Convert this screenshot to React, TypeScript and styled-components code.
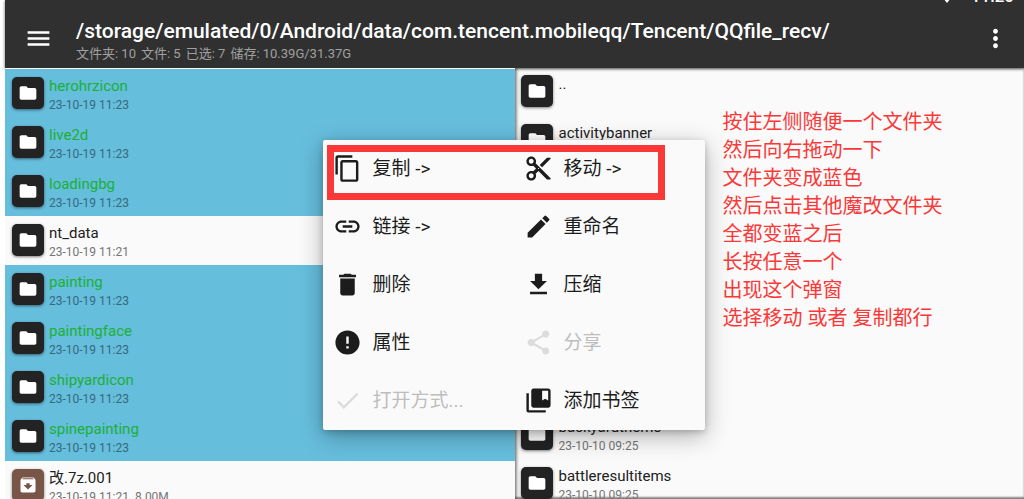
import React from 'react';
import styled, { createGlobalStyle, css } from 'styled-components';
import type { IconType } from 'react-icons';
import {
  MdArchive,
  MdCheck,
  MdCollectionsBookmark,
  MdContentCopy,
  MdContentCut,
  MdDelete,
  MdEdit,
  MdError,
  MdFileDownload,
  MdFolder,
  MdLink,
  MdMenu,
  MdMoreVert,
  MdShare,
} from 'react-icons/md';

const GlobalStyle = createGlobalStyle`
  * { box-sizing: border-box; }
  body {
    margin: 0;
    background: #fff;
    font-family: Roboto, "Noto Sans CJK SC", sans-serif;
    color: #212121;
  }
  button { font: inherit; color: inherit; background: none; border: 0; padding: 0; }
`;

const Page = styled.div`
  height: 100vh;
  padding-left: 5px;
  display: flex;
  flex-direction: column;
  overflow: hidden;
`;

const Header = styled.header`
  position: relative;
  z-index: 1;
  flex: none;
  background: #303030;
  color: #fff;
  box-shadow: 0 1px 3px rgba(0, 0, 0, 0.6);
`;

const StatusBar = styled.div`
  height: 4px;
  padding-right: 10px;
  display: flex;
  justify-content: flex-end;
  align-items: flex-end;
  gap: 16px;
  overflow: hidden;
`;

const Signal = styled.svg`
  flex: none;
  width: 16px;
  height: 14px;
  fill: #fff;
`;

const Clock = styled.span`
  font-size: 17px;
  font-weight: 500;
  line-height: 16px;
`;

const Toolbar = styled.div`
  height: 64px;
  padding: 0 14px 0 18px;
  display: flex;
  align-items: center;
`;

const IconButton = styled.button`
  flex: none;
  width: 30px;
  height: 30px;
  padding-top: 4px;
  display: flex;
  align-items: center;
  justify-content: center;
  svg { width: 29px; height: 29px; flex: none; }
`;

const Heading = styled.div`
  flex: 1;
  min-width: 0;
  margin-left: 23px;
  padding-top: 8px;
`;

const Path = styled.h1`
  margin: 0;
  font-size: 21px;
  font-weight: 500;
  line-height: 28px;
  white-space: nowrap;
`;

const Summary = styled.p`
  margin: 0;
  display: flex;
  gap: 5px;
  font-size: 13px;
  line-height: 18px;
  color: #a0a0a0;
`;

const Panels = styled.main`
  position: relative;
  flex: 1;
  min-height: 0;
  display: grid;
  grid-template-columns: 1fr 1fr;
`;

const Panel = styled.ul<{ $side: 'left' | 'right' }>`
  margin: 0;
  padding: 0;
  list-style: none;
  min-width: 0;
  min-height: 0;
  overflow: hidden;
  background: #fafafa;
  ${({ $side }) =>
    $side === 'left'
      ? css`
          position: relative;
          z-index: 1;
          border-top: 1px solid #fff;
        `
      : css`
          box-shadow: inset 2px 0 3px rgba(0, 0, 0, 0.4), inset 0 -2px 2px rgba(0, 0, 0, 0.4);
        `}
`;

const Row = styled.li<{ $selected?: boolean; $side: 'left' | 'right' }>`
  height: 49px;
  padding: ${({ $side }) => ($side === 'left' ? '8px 7px' : '7px 6px')};
  display: flex;
  gap: ${({ $side }) => ($side === 'left' ? '5px' : '6px')};
  background: ${({ $selected }) => ($selected ? '#66bedd' : 'transparent')};
`;

const Tile = styled.span<{ $archive?: boolean }>`
  flex: none;
  width: 32px;
  height: 32px;
  border-radius: 5px;
  display: flex;
  align-items: center;
  justify-content: center;
  color: #fff;
  background: ${({ $archive }) => ($archive ? '#795548' : '#232323')};
  box-shadow: 0 1px 3px rgba(0, 0, 0, 0.5);
`;

const FileText = styled.div`
  min-width: 0;
  white-space: nowrap;
`;

const FileName = styled.div<{ $selected?: boolean }>`
  font-size: 15px;
  line-height: 18px;
  color: ${({ $selected }) => ($selected ? '#1bb034' : '#212121')};
`;

const FileMeta = styled.div<{ $selected?: boolean }>`
  display: flex;
  gap: 6px;
  font-size: 12px;
  line-height: 20px;
  color: ${({ $selected }) => ($selected ? '#36697c' : '#757575')};
`;

const Overlay = styled.div`
  position: absolute;
  inset: 0;
  z-index: 2;
  padding: 2px 2px 0 0;
  display: grid;
  place-items: center;
`;

const Menu = styled.div`
  position: relative;
  width: 382px;
  display: grid;
  grid-template-columns: 1fr 1fr;
  background: #fafafa;
  border-radius: 2px;
  box-shadow: 0 6px 24px rgba(0, 0, 0, 0.3), 0 2px 6px rgba(0, 0, 0, 0.2);
`;

const MenuItem = styled.button`
  height: 58px;
  padding: 0 10px;
  display: flex;
  align-items: center;
  gap: 11px;
  font-size: 19px;
  line-height: 28px;
  text-align: left;
  color: #1c1c1c;
  svg { width: 29px; height: 29px; flex: none; }
  &:disabled { color: #bdbdbd; }
  &:disabled svg { color: #dcdcdc; }
`;

const Marker = styled.div`
  position: absolute;
  top: 5px;
  left: 4px;
  width: 338px;
  height: 55px;
  border: 7px solid #fb3838;
  pointer-events: none;
`;

const Notes = styled.div`
  position: absolute;
  z-index: 2;
  top: 40px;
  left: calc(50% + 208px);
  font-size: 20px;
  font-weight: 400;
  line-height: 28px;
  color: #fb3838;
  white-space: nowrap;
  p { margin: 0; }
`;

interface Entry {
  name?: string;
  date?: string;
  size?: string;
  selected?: boolean;
  archive?: boolean;
}

const leftEntries: Entry[] = [
  { name: 'herohrzicon', date: '23-10-19 11:23', selected: true },
  { name: 'live2d', date: '23-10-19 11:23', selected: true },
  { name: 'loadingbg', date: '23-10-19 11:23', selected: true },
  { name: 'nt_data', date: '23-10-19 11:21' },
  { name: 'painting', date: '23-10-19 11:23', selected: true },
  { name: 'paintingface', date: '23-10-19 11:23', selected: true },
  { name: 'shipyardicon', date: '23-10-19 11:23', selected: true },
  { name: 'spinepainting', date: '23-10-19 11:23', selected: true },
  { name: '改.7z.001', date: '23-10-19 11:21', size: '8.00M', archive: true },
];

const rightEntries: Entry[] = [
  { name: '..' },
  { name: 'activitybanner' },
  {},
  {},
  {},
  {},
  {},
  { name: 'backyardtheme', date: '23-10-10 09:25' },
  { name: 'battleresultitems', date: '23-10-10 09:25' },
];

const actions: { icon: IconType; label: string; disabled?: boolean }[] = [
  { icon: MdContentCopy, label: '复制 ->' },
  { icon: MdContentCut, label: '移动 ->' },
  { icon: MdLink, label: '链接 ->' },
  { icon: MdEdit, label: '重命名' },
  { icon: MdDelete, label: '删除' },
  { icon: MdFileDownload, label: '压缩' },
  { icon: MdError, label: '属性' },
  { icon: MdShare, label: '分享', disabled: true },
  { icon: MdCheck, label: '打开方式...', disabled: true },
  { icon: MdCollectionsBookmark, label: '添加书签' },
];

const notes = [
  '按住左侧随便一个文件夹',
  '然后向右拖动一下',
  '文件夹变成蓝色',
  '然后点击其他魔改文件夹',
  '全都变蓝之后',
  '长按任意一个',
  '出现这个弹窗',
  '选择移动 或者 复制都行',
];

function FileList({ entries, side }: { entries: Entry[]; side: 'left' | 'right' }) {
  return (
    <Panel $side={side}>
      {entries.map((e, i) => (
        <Row key={i} $selected={e.selected} $side={side}>
          <Tile $archive={e.archive}>
            {e.archive ? <MdArchive size={20} /> : <MdFolder size={20} />}
          </Tile>
          <FileText>
            <FileName $selected={e.selected}>{e.name}</FileName>
            <FileMeta $selected={e.selected}>
              {e.date && <span>{e.date}</span>}
              {e.size && <span>{e.size}</span>}
            </FileMeta>
          </FileText>
        </Row>
      ))}
    </Panel>
  );
}

export default function App() {
  return (
    <>
      <GlobalStyle />
      <Page>
        <Header>
          <StatusBar>
            <Signal viewBox="0 0 16 14" aria-hidden="true">
              <path d="M8 13 0 3a13 13 0 0 1 16 0z" />
            </Signal>
            <Clock>11:20</Clock>
          </StatusBar>
          <Toolbar>
            <IconButton aria-label="Menu"><MdMenu /></IconButton>
            <Heading>
              <Path>/storage/emulated/0/Android/data/com.tencent.mobileqq/Tencent/QQfile_recv/</Path>
              <Summary>
                <span>文件夹: 10</span>
                <span>文件: 5</span>
                <span>已选: 7</span>
                <span>储存: 10.39G/31.37G</span>
              </Summary>
            </Heading>
            <IconButton aria-label="More"><MdMoreVert /></IconButton>
          </Toolbar>
        </Header>
        <Panels>
          <FileList entries={leftEntries} side="left" />
          <FileList entries={rightEntries} side="right" />
          <Notes>
            {notes.map((n) => (
              <p key={n}>{n}</p>
            ))}
          </Notes>
          <Overlay>
            <Menu>
              {actions.map(({ icon: Icon, label, disabled }) => (
                <MenuItem key={label} type="button" disabled={disabled}>
                  <Icon />
                  {label}
                </MenuItem>
              ))}
              <Marker />
            </Menu>
          </Overlay>
        </Panels>
      </Page>
    </>
  );
}
